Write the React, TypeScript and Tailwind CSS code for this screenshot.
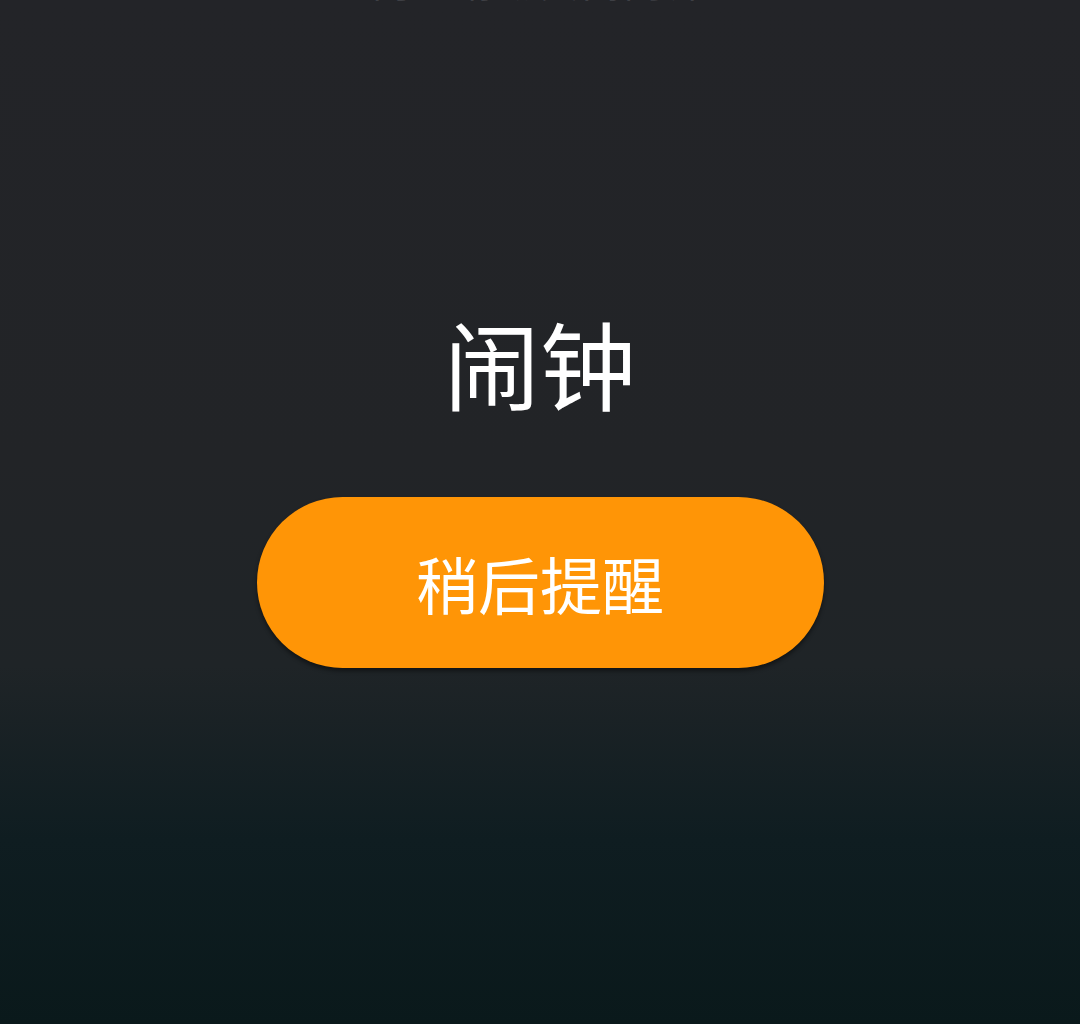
export default function App() {
    return (
        <div className="relative w-[1080px] h-[1024px] overflow-hidden bg-[linear-gradient(180deg,#232428_0%,#222427_45%,#1f2427_65%,#0f1d21_82%,#0a191b_100%)] font-['Noto_Sans_CJK_SC',sans-serif]">
            <div className="flex flex-col items-center">
                <p className="-mt-[41px] h-[44px] text-[38px] leading-[44px] text-[#3e3f44] tracking-[4px]">
                    向上滑动关闭闹钟
                </p>
                <h1 className="mt-[299px] text-[96px] leading-[120px] font-normal text-white">
                    闹钟
                </h1>
                <button className="mt-[75px] w-[567px] h-[171px] rounded-full bg-[#ff9506] shadow-[0_3px_4px_rgba(0,0,0,0.45)] text-white text-[62px] leading-none font-normal">
                    稍后提醒
                </button>
            </div>
        </div>
    )
}
